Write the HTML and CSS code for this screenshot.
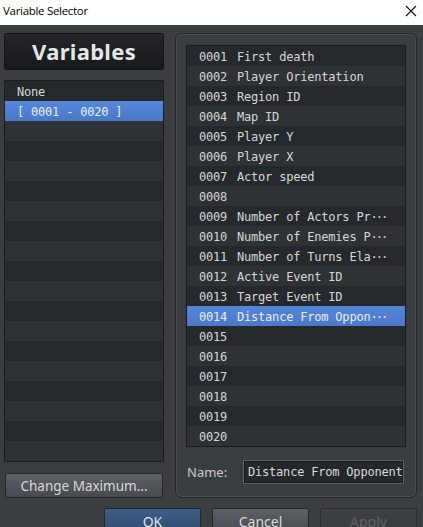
FILE: index.html
```html
<!DOCTYPE html>
<html lang="en">
	<head>
		<meta charset="UTF-8" />
		<title>Variable Selector</title>
		<link rel="stylesheet" href="styles.css">
	</head>
	<body>
		<div class="titlebar">
			<span class="title">Variable Selector</span>
			<svg class="close" width="12" height="12" viewBox="0 0 12 12">
				<path d="M1 1 L11 11 M11 1 L1 11" stroke="#111" stroke-width="1.1" fill="none" />
			</svg>
		</div>

		<div class="dialog">
			<div class="main">
				<!-- left column: groups -->
				<div class="left">
					<div class="header">Variables</div>
					<div class="list groups">
						<div class="row">None</div>
						<div class="row selected">[ 0001 - 0020 ]</div>
						<div class="row"></div><div class="row"></div><div class="row"></div>
						<div class="row"></div><div class="row"></div><div class="row"></div>
						<div class="row"></div><div class="row"></div><div class="row"></div>
						<div class="row"></div><div class="row"></div><div class="row"></div>
						<div class="row"></div><div class="row"></div><div class="row"></div>
						<div class="row"></div><div class="row"></div><div class="row"></div>
					</div>
					<button type="button" class="btn">Change Maximum...</button>
				</div>

				<!-- right column: variables -->
				<div class="panel">
					<div class="list vars">
						<div class="row"><span class="num">0001</span>First death</div>
						<div class="row"><span class="num">0002</span>Player Orientation</div>
						<div class="row"><span class="num">0003</span>Region ID</div>
						<div class="row"><span class="num">0004</span>Map ID</div>
						<div class="row"><span class="num">0005</span>Player Y</div>
						<div class="row"><span class="num">0006</span>Player X</div>
						<div class="row"><span class="num">0007</span>Actor speed</div>
						<div class="row"><span class="num">0008</span></div>
						<div class="row"><span class="num">0009</span>Number of Actors Pr<span class="dots">···</span></div>
						<div class="row"><span class="num">0010</span>Number of Enemies P<span class="dots">···</span></div>
						<div class="row"><span class="num">0011</span>Number of Turns Ela<span class="dots">···</span></div>
						<div class="row"><span class="num">0012</span>Active Event ID</div>
						<div class="row"><span class="num">0013</span>Target Event ID</div>
						<div class="row selected"><span class="num">0014</span>Distance From Oppon<span class="dots">···</span></div>
						<div class="row"><span class="num">0015</span></div>
						<div class="row"><span class="num">0016</span></div>
						<div class="row"><span class="num">0017</span></div>
						<div class="row"><span class="num">0018</span></div>
						<div class="row"><span class="num">0019</span></div>
						<div class="row"><span class="num">0020</span></div>
					</div>
					<div class="name-row">
						<label class="name-label">Name:</label>
						<div class="name-input">Distance From Opponent</div>
					</div>
				</div>
			</div>

			<div class="footer">
				<button type="button" class="btn ok">OK</button>
				<button type="button" class="btn">Cancel</button>
				<button type="button" class="btn disabled">Apply</button>
			</div>
		</div>
	</body>
</html>
```

FILE: styles.css
```css
html, body {
	margin: 0;
	height: 100%;
	overflow: hidden;
}

body {
	background-color: #3b3e41;
	font-family: "Noto Sans", "Open Sans", sans-serif;
}

.titlebar {
	height: 25px;
	background-color: #ffffff;
	display: flex;
	align-items: center;
	justify-content: space-between;
	padding: 0 6px 0 3px;
	box-sizing: border-box;
}

.title {
	font-family: "Open Sans", sans-serif;
	font-size: 11.5px;
	color: #000000;
	letter-spacing: -0.3px;
	margin-top: -4px;
}

.close {
	margin-top: -3px;
}

.dialog {
	padding: 8px 6px 0 4px;
}

.main {
	display: grid;
	grid-template-columns: 160px 242px;
	gap: 11px;
}

.left {
	display: flex;
	flex-direction: column;
}

.header {
	height: 37px;
	box-sizing: border-box;
	border: 1px solid #141517;
	border-radius: 2px;
	background: linear-gradient(#232528, #17191b);
	color: #e6e6e6;
	font-weight: bold;
	font-size: 22px;
	text-align: center;
	line-height: 34px;
	letter-spacing: 0.3px;
}

.list {
	font-family: "DejaVu Sans Mono", monospace;
	font-size: 12px;
	letter-spacing: -0.2px;
	color: #d6d6d6;
	background-color: #26292c;
	border: 1px solid #1a1c1e;
	overflow: hidden;
}

.row {
	height: 20px;
	line-height: 22px;
	white-space: nowrap;
}

.dots {
	letter-spacing: -2px;
}

.list .row:nth-child(even) {
	background-color: #2f3235;
}

.list .row.selected {
	background: linear-gradient(#5587d8, #4a78c8);
	color: #e8eef8;
}

.groups {
	margin-top: 10px;
	height: 382px;
	box-sizing: border-box;
}

.groups .row {
	padding-left: 12px;
}

.groups .row:nth-child(even) {
	background-color: #26292c;
}

.groups .row:nth-child(odd) {
	background-color: #2f3235;
}

.groups .row:first-child {
	background-color: #26292c;
}

.btn {
	border: 1px solid #24262a;
	border-radius: 2px;
	background: linear-gradient(#5d6064, #474a4e);
	color: #d8d8d8;
	font-family: "Noto Sans", sans-serif;
	font-size: 13.5px;
	height: 25px;
	padding: 0;
	cursor: pointer;
}

.left .btn {
	margin-top: 11px;
	margin-left: 1px;
	width: 158px;
}

.panel {
	height: 465px;
	box-sizing: border-box;
	border: 1px solid #232527;
	box-shadow: inset 0 0 0 1px #4b4e52;
	border-radius: 7px;
	background-color: #3a3d40;
	padding: 11px 10px 0 10px;
}

.vars {
	height: 402px;
	box-sizing: border-box;
}

.vars .row {
	padding-left: 12px;
}

.num {
	display: inline-block;
	width: 38px;
}

.name-row {
	display: flex;
	align-items: center;
	margin-top: 13px;
}

.name-label {
	color: #c8c8c8;
	font-size: 13px;
	width: 56px;
	padding-left: 1px;
}

.name-input {
	width: 161px;
	height: 24px;
	box-sizing: border-box;
	border: 1px solid #5c5f63;
	background-color: #25282b;
	box-shadow: inset 0 0 0 1px #17191b;
	font-family: "DejaVu Sans Mono", monospace;
	font-size: 12px;
	letter-spacing: -0.2px;
	color: #d8d8d8;
	line-height: 22px;
	padding-left: 4px;
	white-space: nowrap;
	overflow: hidden;
}

.footer {
	display: flex;
	gap: 11px;
	padding-left: 100px;
	margin-top: 10px;
}

.footer .btn {
	width: 97px;
	height: 26px;
	font-size: 14px;
}

.footer .ok {
	background: linear-gradient(#3f5e86, #2f4a6e);
	color: #dde4ee;
}

.footer .disabled {
	background: linear-gradient(#3e4144, #383b3e);
	color: #5e6165;
	border-color: #2a2c2f;
}
```
